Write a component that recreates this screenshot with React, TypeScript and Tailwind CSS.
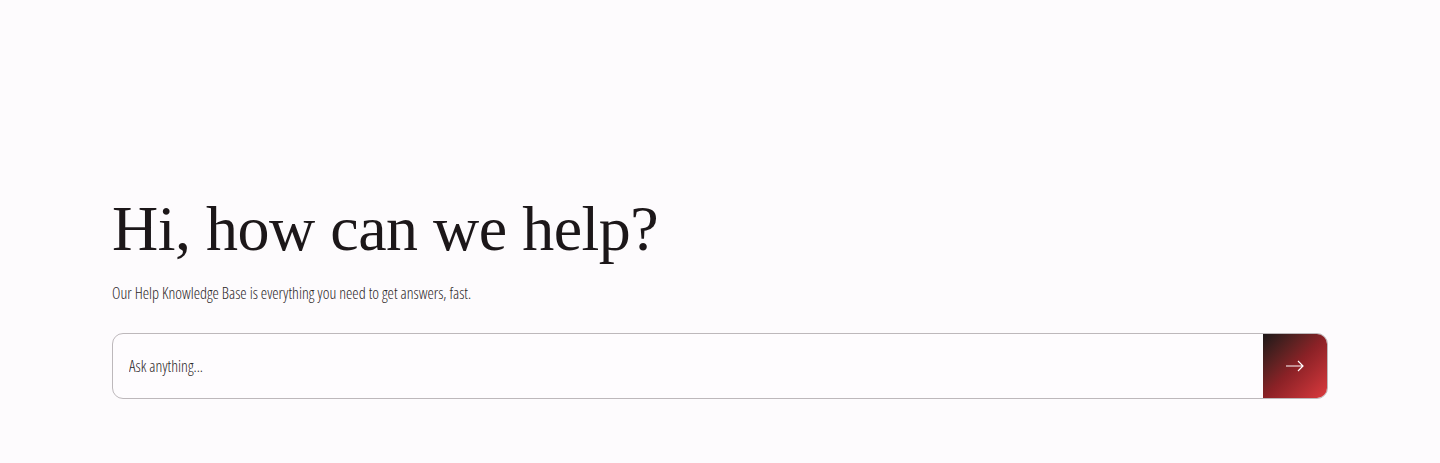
export default function App() {
  return (
    <div className="min-h-[463px] w-full bg-[#fdfbfd] pt-[193px] px-[112px]">
      <h1 className="font-['Liberation_Serif',serif] text-[64px] leading-[72px] text-[#1c1719] tracking-[-0.5px]">
        Hi, how can we help?
      </h1>
      <p className="mt-[16px] font-['Open_Sans',sans-serif] font-light font-stretch-condensed text-[16px] text-[#2c2628]">
        Our Help Knowledge Base is everything you need to get answers, fast.
      </p>
      <form
        className="mt-[28px] flex h-[66px] w-full overflow-hidden rounded-[11px] border border-[#bdb8bb] bg-[#fefcfe]"
        onSubmit={(e) => e.preventDefault()}
      >
        <input
          type="text"
          placeholder="Ask anything..."
          className="flex-1 bg-transparent px-4 font-['Open_Sans',sans-serif] font-light font-stretch-condensed text-[16px] text-[#2c2628] placeholder:text-[#2c2628] outline-none"
        />
        <button
          type="submit"
          className="flex w-[64px] items-center justify-center bg-gradient-to-br from-[#1d1718] via-[#8a2126] to-[#dc3a3e]"
        >
          <svg width="20" height="12" viewBox="0 0 20 12" fill="none" stroke="white" strokeWidth="1.2">
            <path d="M1 6h17M13 1l5 5-5 5" />
          </svg>
        </button>
      </form>
    </div>
  );
}
